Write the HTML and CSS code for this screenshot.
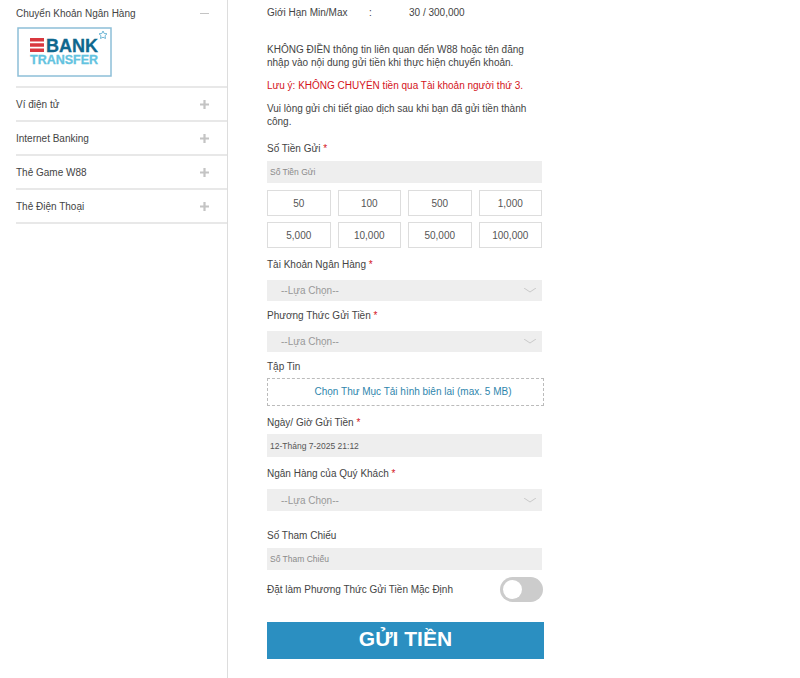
FILE: index.html
```html
<!DOCTYPE html>
<html lang="vi">
<head>
  <meta charset="UTF-8" />
  <meta name="viewport" content="width=device-width, initial-scale=1.0" />
  <title>Gửi Tiền</title>
  <link rel="stylesheet" href="styles.css">
</head>
<body>
  <div class="page">
    <aside class="sidebar">
      <div class="method method-open">
        <div class="method-head">
          <span>Chuyển Khoản Ngân Hàng</span>
          <svg class="sign" width="9" height="9" viewBox="0 0 9 9"><path d="M0 4.500h9" stroke="#c4c4c4" stroke-width="1"/></svg>
        </div>
        <svg class="bank-logo" width="95" height="50" viewBox="0 0 95 50">
          <rect x="1" y="1" width="93" height="48" fill="#fff" stroke="#8dbfd8" stroke-width="1.5"/>
          <path d="M13 11h14v3.500H13zM13 16.250h14v3.500H13zM13 21.500h14v3.500H13z" fill="#d9383f"/>
          <text x="29" y="25" class="logo-bank" textLength="52" lengthAdjust="spacingAndGlyphs">BANK</text>
          <text x="13" y="37" class="logo-transfer" textLength="68" lengthAdjust="spacingAndGlyphs">TRANSFER</text>
          <path d="M86 4l1.200 2.500 2.800.3-2 1.900.5 2.800-2.500-1.300-2.500 1.300.5-2.800-2-1.900 2.800-.3z" fill="none" stroke="#6fb7d6" stroke-width="1"/>
        </svg>
      </div>
      <div class="method">
        <span>Ví điện tử</span>
        <svg class="sign" width="9" height="9" viewBox="0 0 9 9"><path d="M0 4.500h9M4.500 0v9" stroke="#c4c4c4" stroke-width="2.200"/></svg>
      </div>
      <div class="method">
        <span>Internet Banking</span>
        <svg class="sign" width="9" height="9" viewBox="0 0 9 9"><path d="M0 4.500h9M4.500 0v9" stroke="#c4c4c4" stroke-width="2.200"/></svg>
      </div>
      <div class="method">
        <span>Thẻ Game W88</span>
        <svg class="sign" width="9" height="9" viewBox="0 0 9 9"><path d="M0 4.500h9M4.500 0v9" stroke="#c4c4c4" stroke-width="2.200"/></svg>
      </div>
      <div class="method">
        <span>Thẻ Điện Thoại</span>
        <svg class="sign" width="9" height="9" viewBox="0 0 9 9"><path d="M0 4.500h9M4.500 0v9" stroke="#c4c4c4" stroke-width="2.200"/></svg>
      </div>
    </aside>

    <main class="deposit">
      <div class="limit">
        <span class="limit-name">Giới Hạn Min/Max</span>
        <span class="limit-colon">:</span>
        <span>30 / 300,000</span>
      </div>

      <p class="note note-first">KHÔNG ĐIỀN thông tin liên quan đến W88 hoặc tên đăng nhập vào nội dung gửi tiền khi thực hiện chuyển khoản.</p>
      <p class="note note-red">Lưu ý: KHÔNG CHUYỂN tiền qua Tài khoản người thứ 3.</p>
      <p class="note">Vui lòng gửi chi tiết giao dịch sau khi bạn đã gửi tiền thành công.</p>

      <label class="label label-amount">Số Tiền Gửi <em>*</em></label>
      <input class="field field-amount" type="text" placeholder="Số Tiền Gửi" />

      <div class="amounts">
        <button type="button">50</button>
        <button type="button">100</button>
        <button type="button">500</button>
        <button type="button">1,000</button>
        <button type="button">5,000</button>
        <button type="button">10,000</button>
        <button type="button">50,000</button>
        <button type="button">100,000</button>
      </div>

      <label class="label label-account">Tài Khoản Ngân Hàng <em>*</em></label>
      <div class="select">
        <span>--Lựa Chọn--</span>
        <svg width="12" height="5" viewBox="0 0 12 5"><path d="M0 0l6 4 6-4" fill="none" stroke="#c9c9c9"/></svg>
      </div>

      <label class="label">Phương Thức Gửi Tiền <em>*</em></label>
      <div class="select">
        <span>--Lựa Chọn--</span>
        <svg width="12" height="5" viewBox="0 0 12 5"><path d="M0 0l6 4 6-4" fill="none" stroke="#c9c9c9"/></svg>
      </div>

      <label class="label">Tập Tin</label>
      <div class="upload">Chọn Thư Mục Tải hình biên lai (max. 5 MB)</div>

      <label class="label label-wide">Ngày/ Giờ Gửi Tiền <em>*</em></label>
      <input class="field field-date" type="text" value="12-Tháng 7-2025 21:12" />

      <label class="label label-wide">Ngân Hàng của Quý Khách <em>*</em></label>
      <div class="select select-bank">
        <span>--Lựa Chọn--</span>
        <svg width="12" height="5" viewBox="0 0 12 5"><path d="M0 0l6 4 6-4" fill="none" stroke="#c9c9c9"/></svg>
      </div>

      <label class="label label-ref">Số Tham Chiếu</label>
      <input class="field field-ref" type="text" placeholder="Số Tham Chiếu" />

      <div class="default-row">
        <span>Đặt làm Phương Thức Gửi Tiền Mặc Định</span>
        <span class="toggle"><span class="knob"></span></span>
      </div>

      <button class="submit" type="button">GỬI TIỀN</button>
    </main>
  </div>
</body>
</html>
```

FILE: styles.css
```css
html, body {
  margin: 0;
  height: 100%;
  overflow: hidden;
}
body {
  font-family: "Liberation Sans", Arial, sans-serif;
  font-size: 10px;
  color: #444;
  background: white;
}
.page {
  display: flex;
  height: 678px;
}

/* left column */
.sidebar {
  width: 211px;
  margin-left: 16px;
  border-right: 1px solid #ddd;
}
.method {
  display: flex;
  justify-content: space-between;
  align-items: center;
  height: 32px;
  padding-right: 18px;
  border-bottom: 2px solid #e8e8e8;
}
.method-open {
  display: block;
  height: 86px;
  padding-right: 0;
}
.method-head {
  display: flex;
  justify-content: space-between;
  align-items: center;
  height: 14px;
  padding: 6px 18px 7px 0;
}
.sign {
  display: block;
}
.bank-logo {
  display: block;
  margin-left: 1px;
}
.logo-bank {
  font-size: 18px;
  font-weight: bold;
  fill: #0f678d;
  stroke: #0f678d;
  stroke-width: 0.3;
}
.logo-transfer {
  font-size: 12px;
  font-weight: bold;
  fill: #63c3e0;
  stroke: #63c3e0;
  stroke-width: 0.3;
}

/* form column */
.deposit {
  width: 277px;
  margin-left: 39px;
  padding-top: 6px;
}
.limit {
  display: flex;
  line-height: 14px;
}
.limit-name {
  width: 102px;
}
.limit-colon {
  width: 40px;
}
.note {
  margin: 10px 0 0;
  width: 275px;
  line-height: 13px;
}
.note-first {
  margin-top: 23px;
}
.note-red {
  color: #d4141c;
}
.label {
  display: block;
  margin: 8px 0 -1px;
  line-height: 14px;
}
.label em {
  font-style: normal;
  color: #d4141c;
}
.label-amount {
  margin-top: 14px;
}
.label-account {
  margin-top: 10px;
}
.label-wide {
  margin-top: 10px;
}
.label-ref {
  margin-top: 18px;
}
.field {
  display: block;
  box-sizing: border-box;
  width: 275px;
  height: 22px;
  margin-top: 6px;
  padding: 0 3px;
  border: 0;
  outline: 0;
  background: #eee;
  font-family: inherit;
  font-size: 8.500px;
  color: #555;
}
.field::placeholder {
  color: #8a8a8a;
}
.field-date {
  height: 23px;
  margin-top: 5px;
}
.amounts {
  display: grid;
  grid-template-columns: repeat(4, 1fr);
  gap: 6px 7px;
  width: 275px;
  margin-top: 7px;
}
.amounts button {
  height: 26px;
  padding: 0;
  border: 1px solid #ddd;
  background: white;
  font-family: inherit;
  font-size: 10px;
  color: #555;
}
.select {
  display: flex;
  justify-content: space-between;
  align-items: center;
  box-sizing: border-box;
  width: 275px;
  height: 21px;
  margin-top: 9px;
  padding: 0 6px 0 14px;
  background: #eee;
  color: #999;
}
.select-bank {
  height: 22px;
}
.upload {
  box-sizing: border-box;
  width: 277px;
  height: 28px;
  margin-top: 5px;
  padding-left: 15px;
  border: 1px dashed #bbb;
  line-height: 26px;
  text-align: center;
  color: #2f86ad;
}
.default-row {
  display: flex;
  justify-content: space-between;
  align-items: center;
  width: 276px;
  margin-top: 7px;
}
.toggle {
  display: flex;
  align-items: center;
  box-sizing: border-box;
  width: 43px;
  height: 25px;
  padding-left: 3px;
  border-radius: 13px;
  background: #ccc;
}
.knob {
  width: 19px;
  height: 19px;
  border-radius: 50%;
  background: white;
}
.submit {
  display: block;
  width: 277px;
  height: 37px;
  margin-top: 20px;
  padding: 0 0 3px;
  border: 0;
  background: #2b8fc1;
  color: white;
  font-family: inherit;
  font-size: 21px;
  font-weight: bold;
}
```
